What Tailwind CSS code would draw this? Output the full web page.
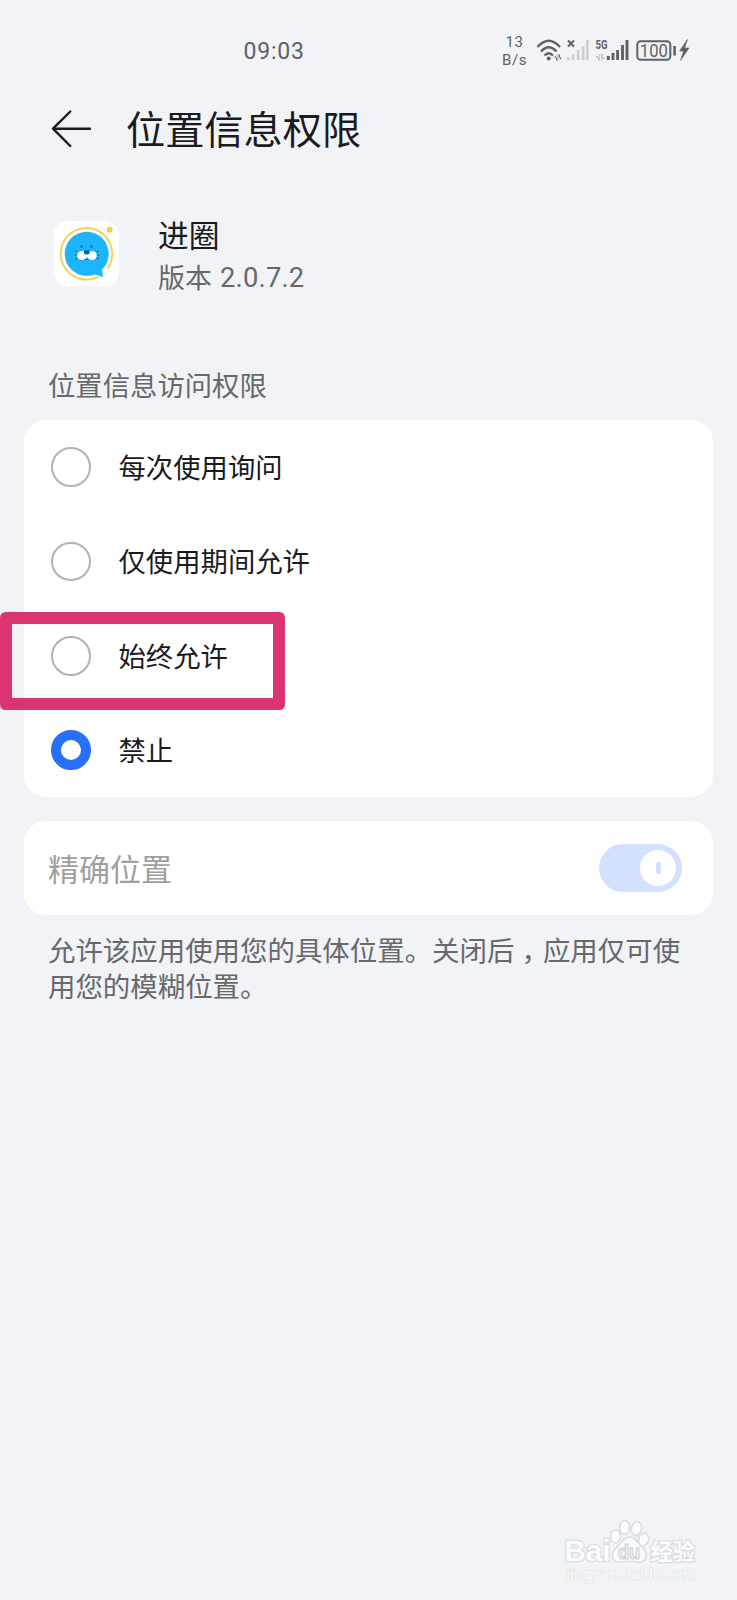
<!DOCTYPE html>
<html lang="zh-CN">
<head>
<meta charset="utf-8">
<title>位置信息权限</title>
<script src="https://cdn.jsdelivr.net/npm/@tailwindcss/browser@4"></script>
</head>
<body class="relative w-[737px] h-[1600px] overflow-hidden bg-[#f1f3f7] text-[#1a1b1e] font-['Noto_Sans_CJK_SC',sans-serif]">
  <!-- status bar -->
  <header class="flex h-[100px] items-start pt-[33px] text-[#5f6166] font-[Roboto,sans-serif]">
    <div class="mt-[2px] ml-[243.500px] w-[257px] text-[23px] leading-[34px] tracking-[0.8px]">09:03</div>
    <div class="w-[28px] text-center text-[15px] leading-[18px] tracking-[0.5px]">13<br>B/s</div>
    <svg class="ml-[6.500px] mt-px" width="156" height="34" viewBox="535 34 156 34" fill="none">
      <g stroke="#5f6166" stroke-width="2.3">
        <path d="M537.500 47Q548.700 34.500 560 47"/>
        <path d="M541 51.500Q548.700 43 556.500 51.500"/>
        <path d="M544.500 55.500Q548.700 51 553 55.500"/>
      </g>
      <circle cx="548.700" cy="58.600" r="2" fill="#5f6166"/>
      <path d="M554 57.500h3v-3.200zM556 54.500h1.300v6H556zM558.700 54.500h1.300v6h-1.300zM559 60.500h.5l2.300-3H559z" fill="#5f6166"/>
      <path d="M568 40.500l6 6M574 40.500l-6 6" stroke="#5f6166" stroke-width="2.100"/>
      <path d="M568.300 60v-3M573.200 60v-6M578.200 60v-10M583.200 60v-14M587.300 60v-20" stroke="#ccced1" stroke-width="2.700"/>
      <text x="595.500" y="49" font-family="Roboto" font-weight="700" font-size="12.500" textLength="12" lengthAdjust="spacingAndGlyphs" fill="#5f6166">5G</text>
      <path d="M595.500 57.500h3.500v-3.500zM598 54h1.500v6.500H598zM601 54h1.500v6.500H601zM601.500 60.500h.7l2.800-3h-3.500z" fill="#b0b2b6"/>
      <path d="M608.300 60v-4M613 60v-7M617.600 60v-10M622.500 60v-15M627 60v-20" stroke="#5f6166" stroke-width="2.900"/>
      <rect x="637.300" y="41.200" width="33" height="18.600" rx="3.500" stroke="#5f6166" stroke-width="2"/>
      <text x="639.800" y="57" font-family="Roboto" font-size="18" textLength="28" lengthAdjust="spacingAndGlyphs" fill="#5f6166">100</text>
      <path d="M674.600 46v9.500" stroke="#5f6166" stroke-width="2.600"/>
      <path d="M687.500 39.500l-8 11.500h4.200l-3.200 9.500 8.500-12.500h-4.400z" fill="#5f6166" stroke="#5f6166" stroke-width=".6"/>
    </svg>
  </header>

  <!-- title bar -->
  <div class="flex h-[60px] items-start pl-[51px]">
    <svg class="mt-[8px]" width="42" height="42" viewBox="51 108 42 42" fill="none" stroke="#1a1b1e" stroke-width="2.400" stroke-linecap="round" stroke-linejoin="round"><path d="M70.300 111.500L53 128.700L70.300 146M53.500 128.700H90"/></svg>
    <h1 class="-mt-[3px] ml-[33px] text-[39.200px] leading-[60px]">位置信息权限</h1>
  </div>

  <!-- app info -->
  <section class="mt-[50px] flex h-[90px] items-start pl-[53px]">
    <svg class="mt-[10px]" width="68" height="68" viewBox="53 220 68 68" fill="none">
      <rect x="54" y="221" width="65" height="65.500" rx="14" fill="#fff"/>
      <circle cx="86.500" cy="253.800" r="25.800" stroke="#f2d14e" stroke-width="1.900" stroke-dasharray="299 25" pathLength="324" transform="rotate(62 86.500 253.800)"/>
      <circle cx="109.700" cy="229.800" r="3" fill="#f0cf48"/>
      <circle cx="86.700" cy="253.800" r="22" fill="#1cb4fb"/>
      <path d="M92 273.500l11 3.500-1.500-10z" fill="#1cb4fb"/>
      <circle cx="81.500" cy="246.500" r="1.600" fill="#1580bd"/><circle cx="91.500" cy="246.500" r="1.600" fill="#1580bd"/>
      <ellipse cx="82" cy="255.500" rx="4.900" ry="4.500" fill="#fff"/><ellipse cx="91.800" cy="255.500" rx="4.900" ry="4.500" fill="#fff"/>
      <ellipse cx="86.800" cy="252.200" rx="2.900" ry="2.200" fill="#145d91"/>
      <path d="M77.500 252l-2.500-1M77 255h-2.500M77.500 258l-2.500 1.500M96.500 252l2.500-1M97 255h2.500M96.500 258l2.500 1.500M84.500 259.500h4.500" stroke="#145d91" stroke-width=".9"/>
    </svg>
    <div class="ml-[37px]">
      <div class="mt-px text-[30.800px] leading-[46px]">进圈</div>
      <div class="flex text-[27px] leading-[40px] text-[#66686c]"><span>版本</span><span class="mt-px ml-[8px] font-[Roboto,'Noto_Sans_CJK_SC',sans-serif] text-[27.300px] tracking-[0.200px]">2.0.7.2</span></div>
    </div>
  </section>

  <h2 class="mt-[64px] h-[56px] pl-[48px] text-[27.350px] leading-[40px] text-[#66686c]">位置信息访问权限</h2>

  <!-- access options -->
  <section class="mx-[24px] flex h-[377px] flex-col rounded-[22px] bg-white text-[27.350px] leading-[40px]">
    <div class="flex h-[94.400px] items-center pl-[27px]"><span class="size-[39.500px] rounded-full border-2 border-[#b2b2b3]"></span><span class="-mt-[2px] ml-[28px]">每次使用询问</span></div>
    <div class="flex h-[94.400px] items-center pl-[27px]"><span class="size-[39.500px] rounded-full border-2 border-[#b2b2b3]"></span><span class="-mt-[3px] ml-[28px]">仅使用期间允许</span></div>
    <div class="flex h-[94.400px] items-center pl-[27px]"><span class="size-[39.500px] rounded-full border-2 border-[#b2b2b3]"></span><span class="-mt-[2px] ml-[28px]">始终允许</span></div>
    <div class="flex h-[93.800px] items-center pl-[27px]"><span class="size-[39.500px] rounded-full border-[10px] border-[#2670fa]"></span><span class="-mt-[2px] ml-[28px]">禁止</span></div>
  </section>

  <!-- precise location -->
  <section class="mx-[24px] mt-[24px] flex h-[94px] items-center justify-between rounded-[22px] bg-white pl-[24px] pr-[31px]">
    <span class="text-[31px] leading-[46px] text-[#9f9fa0]">精确位置</span>
    <span class="flex h-[48px] w-[83px] items-center justify-end rounded-full bg-[#d3e1fd] pr-[6px]">
      <span class="flex size-[36px] items-center justify-center rounded-full bg-white"><span class="h-[12px] w-[5px] rounded-full bg-[#d3e1fd]"></span></span>
    </span>
  </section>
  <p class="mt-[16px] pl-[48px] text-[27.450px] leading-[36px] text-[#66686c]">允许该应用使用您的具体位置。关闭后<span class="inline-block w-[28.500px] pl-[7px] [font-feature-settings:'halt']">，</span>应用仅可使<br>用您的模糊位置。</p>

  <!-- annotation frame -->
  <svg class="absolute left-0 top-[612px]" width="285" height="98" fill="#db3472" fill-rule="evenodd"><path d="M6 0H279Q285 0 285 6V92Q285 98 279 98H6Q0 98 0 92V6Q0 0 6 0ZM12 12V86H273V12Z"/></svg>

  <!-- watermark -->
  <svg class="absolute left-[555px] top-[1510px]" width="155" height="80" viewBox="555 1510 155 80" fill="#fafbfd" stroke="#dcdde1" stroke-width="1.600">
    <text x="564.500" y="1561" font-family="Liberation Sans" font-weight="700" font-size="29" textLength="46" lengthAdjust="spacingAndGlyphs" paint-order="stroke" stroke-width="2.400">Bai</text>
    <ellipse cx="615.500" cy="1536.500" rx="5" ry="6.500"/><ellipse cx="624.700" cy="1527.500" rx="5" ry="7"/><ellipse cx="636.500" cy="1528.500" rx="5" ry="7" transform="rotate(12 636.500 1528.500)"/><ellipse cx="643.500" cy="1539.500" rx="5" ry="6.500" transform="rotate(18 643.500 1539.500)"/>
    <path d="M629.500 1537C623 1537 622 1543 616 1548C609 1555 613 1563 621 1562C627 1561 632 1561 638 1562C646 1563 649 1555 643 1548C637 1543 636 1537 629.500 1537Z"/>
    <text x="618" y="1559" font-family="Liberation Sans" font-weight="700" font-size="20" textLength="22" lengthAdjust="spacingAndGlyphs" fill="#f3f4f8" stroke="#cfd0d5" stroke-width="1.200">du</text>
    <text x="650.500" y="1560" font-family="Noto Sans CJK SC" font-weight="700" font-size="22.500" textLength="44.500" paint-order="stroke" stroke-width="2.400">经验</text>
    <text x="566" y="1579" font-family="Noto Sans" font-size="14.500" textLength="131" lengthAdjust="spacingAndGlyphs" paint-order="stroke" stroke="#e4e5e9" stroke-width="1.400">jingyan.baidu.com</text>
  </svg>
</body>
</html>
